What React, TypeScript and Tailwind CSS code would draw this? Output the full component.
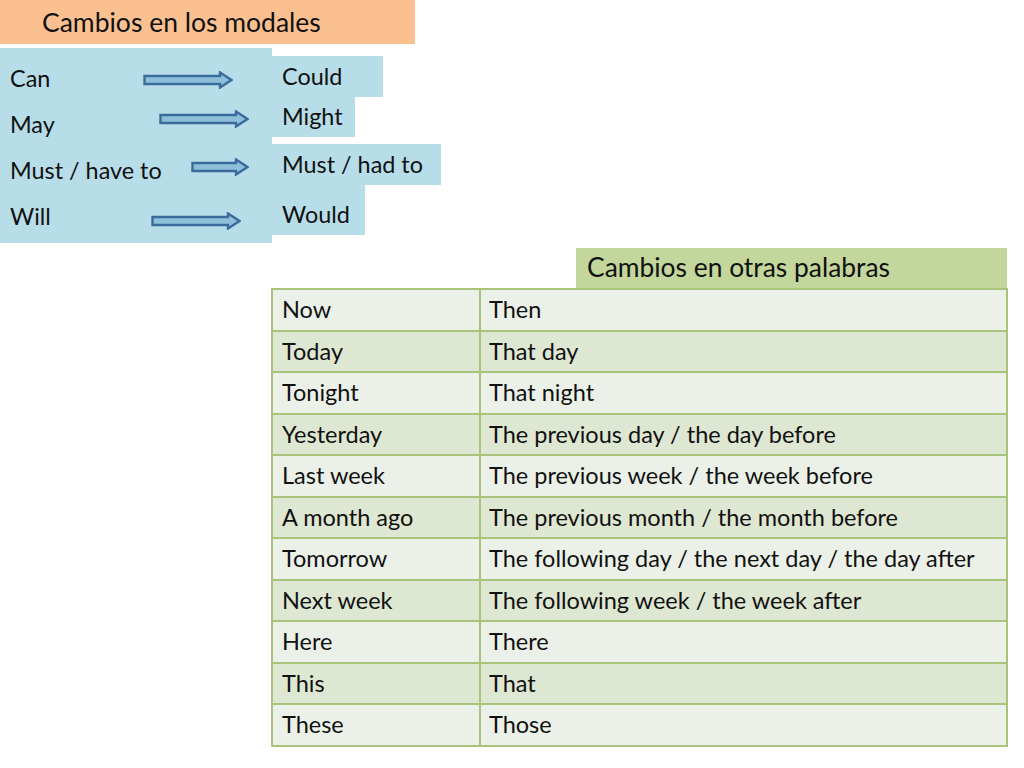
import React from "react";

const modals = [
  { from: "Can", arrowLeft: 143, arrowDy: 1 },
  { from: "May", arrowLeft: 159, arrowDy: -6 },
  { from: "Must / have to", arrowLeft: 191, arrowDy: -4 },
  { from: "Will", arrowLeft: 151, arrowDy: 4 },
];

const rows: [string, string][] = [
  ["Now", "Then"],
  ["Today", "That day"],
  ["Tonight", "That night"],
  ["Yesterday", "The previous day / the day before"],
  ["Last week", "The previous week / the week before"],
  ["A month ago", "The previous month / the month before"],
  ["Tomorrow", "The following day / the next day / the day after"],
  ["Next week", "The following week / the week after"],
  ["Here", "There"],
  ["This", "That"],
  ["These", "Those"],
];

function Arrow({ width }: { width: number }) {
  const h = 18;
  const shaft = 8;
  const head = 13;
  const y1 = (h - shaft) / 2;
  const y2 = y1 + shaft;
  return (
    <svg width={width} height={h} viewBox={`0 0 ${width} ${h}`}>
      <path
        d={`M1.5 ${y1} H${width - head} V1.5 L${width - 1.5} ${h / 2} L${width - head} ${h - 1.5} V${y2} H1.5 Z`}
        fill="#8fc0da"
        stroke="#3a6b9c"
        strokeWidth="2.4"
        strokeLinejoin="miter"
      />
    </svg>
  );
}

export default function App() {
  const font = { fontFamily: "Lato, 'Open Sans', sans-serif" };
  return (
    <div className="w-[1024px] h-[768px] bg-white text-[#111] overflow-hidden" style={font}>
      <div className="w-[415px] h-[44px] bg-[#fac090] pl-[42px] flex items-center text-[26.5px] leading-none">
        Cambios en los modales
      </div>
      <div className="mt-[4px] flex">
        <div className="w-[272px] h-[195px] bg-[#b7dde8] pt-[8px]">
          {modals.map((m, i) => (
            <div key={i} className="relative h-[46px] flex items-center pl-[10px] text-[23.4px]">
              <span>{m.from}</span>
              <div className="absolute" style={{ left: m.arrowLeft, top: 14 + m.arrowDy }}>
                <Arrow width={m.from === "Must / have to" ? 58 : 90} />
              </div>
            </div>
          ))}
        </div>
        <div className="flex flex-col items-start pt-[8px] text-[23.4px]">
          <div className="h-[41px] w-[111px] bg-[#b7dde8] pl-[10px] flex items-center">Could</div>
          <div className="h-[40px] w-[83px] bg-[#b7dde8] pl-[10px] flex items-center">Might</div>
          <div className="mt-[7px] h-[41px] w-[169px] bg-[#b7dde8] pl-[10px] flex items-center">Must / had to</div>
          <div className="h-[50px] w-[93px] bg-[#b7dde8] pl-[10px] flex items-start pt-[12px]">Would</div>
        </div>
      </div>
      <div className="mt-[5px] flex justify-end pr-[17px]">
        <div className="w-[431px] h-[40px] bg-[#c3d69b] pl-[11px] flex items-center text-[26.4px]">
          Cambios en otras palabras
        </div>
      </div>
      <div className="ml-[271px] w-[737px]">
        <table className="w-full border-collapse text-[23.5px]">
          <tbody>
            {rows.map(([a, b], i) => (
              <tr key={i} className={i % 2 === 0 ? "bg-[#ebf1e8]" : "bg-[#dee7d1]"}>
                <td className="w-[208px] h-[41.5px] border-2 border-[#a8c47a] pl-[9px] py-0 align-middle leading-none">{a}</td>
                <td className="h-[41.5px] border-2 border-[#a8c47a] pl-[8px] py-0 align-middle leading-none">{b}</td>
              </tr>
            ))}
          </tbody>
        </table>
      </div>
    </div>
  );
}
